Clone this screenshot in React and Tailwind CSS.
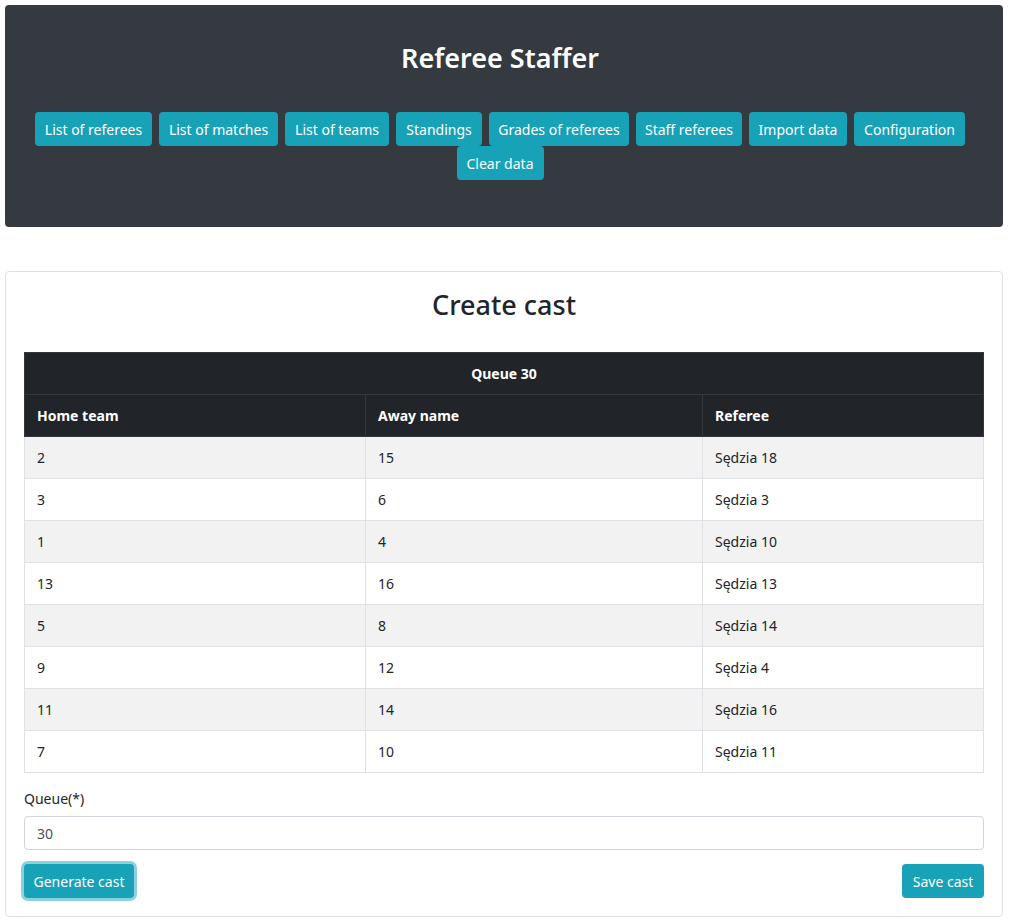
import React, { useState } from "react";

const navItems = [
  { label: "List of referees", w: "w-[117px]" },
  { label: "List of matches", w: "w-[119px]" },
  { label: "List of teams", w: "w-[104px]" },
  { label: "Standings", w: "w-[86px]" },
  { label: "Grades of referees", w: "w-[140px]" },
  { label: "Staff referees", w: "w-[106px]" },
  { label: "Import data", w: "w-[98px]" },
  { label: "Configuration", w: "w-[111px]" },
  { label: "Clear data", w: "w-[87px]" },
];

const cast = [
  { home: "2", away: "15", referee: "Sędzia 18" },
  { home: "3", away: "6", referee: "Sędzia 3" },
  { home: "1", away: "4", referee: "Sędzia 10" },
  { home: "13", away: "16", referee: "Sędzia 13" },
  { home: "5", away: "8", referee: "Sędzia 14" },
  { home: "9", away: "12", referee: "Sędzia 4" },
  { home: "11", away: "14", referee: "Sędzia 16" },
  { home: "7", away: "10", referee: "Sędzia 11" },
];

const App = () => {
  const [queue, setQueue] = useState("30");

  return (
    <div className="min-h-screen bg-white pl-[5px] pr-[7px] pt-[5px] font-['Noto_Sans','Liberation_Sans',sans-serif] text-[14px] text-[#212529]">
      {/* header */}
      <div className="rounded bg-[#343a40] pl-[26px] pr-[34px] pt-[35px] pb-[47px]">
        <h1 className="text-center text-[27px] leading-[36px] font-semibold text-white">
          Referee Staffer
        </h1>
        <div className="mt-[36px] flex flex-wrap justify-center gap-x-[7px]">
          {navItems.map((item) => (
            <button
              key={item.label}
              className={`${item.w} h-[34px] rounded bg-[#17a2b8] text-[14px] text-white whitespace-nowrap`}
            >
              {item.label}
            </button>
          ))}
        </div>
      </div>

      {/* card */}
      <div className="mt-[44px] rounded border border-[#dee2e6] px-[18px] pt-[14px] pb-[18px]">
        <h2 className="text-center text-[27px] leading-[38px] font-medium">Create cast</h2>

        <table className="mt-[28px] w-full border-collapse table-fixed text-[14px]">
          <colgroup>
            <col className="w-[341px]" />
            <col className="w-[337px]" />
            <col />
          </colgroup>
          <thead className="bg-[#212529] text-white">
            <tr>
              <th colSpan={3} className="h-[42px] border border-[#32383e] text-center font-bold">
                Queue 30
              </th>
            </tr>
            <tr>
              <th className="h-[42px] border border-[#32383e] px-3 text-left font-bold">Home team</th>
              <th className="h-[42px] border border-[#32383e] px-3 text-left font-bold">Away name</th>
              <th className="h-[42px] border border-[#32383e] px-3 text-left font-bold">Referee</th>
            </tr>
          </thead>
          <tbody>
            {cast.map((row, i) => (
              <tr key={i} className={i % 2 === 0 ? "bg-[#f2f2f2]" : "bg-white"}>
                <td className="h-[42px] border border-[#dee2e6] px-3">{row.home}</td>
                <td className="h-[42px] border border-[#dee2e6] px-3">{row.away}</td>
                <td className="h-[42px] border border-[#dee2e6] px-3">{row.referee}</td>
              </tr>
            ))}
          </tbody>
        </table>

        <label className="mt-[15px] block leading-[21px]">Queue(*)</label>
        <input
          value={queue}
          onChange={(e) => setQueue(e.target.value)}
          className="mt-[7px] block h-[34px] w-full rounded border border-[#ced4da] px-3 text-[14px] text-[#495057] outline-none"
        />

        <div className="mt-[14px] flex items-center justify-between">
          <button className="h-[34px] w-[110px] rounded bg-[#17a2b8] text-white ring-[3px] ring-[#17a2b8]/50">
            Generate cast
          </button>
          <button className="h-[34px] w-[82px] rounded bg-[#17a2b8] text-white">Save cast</button>
        </div>
      </div>
    </div>
  );
};

export default App;
